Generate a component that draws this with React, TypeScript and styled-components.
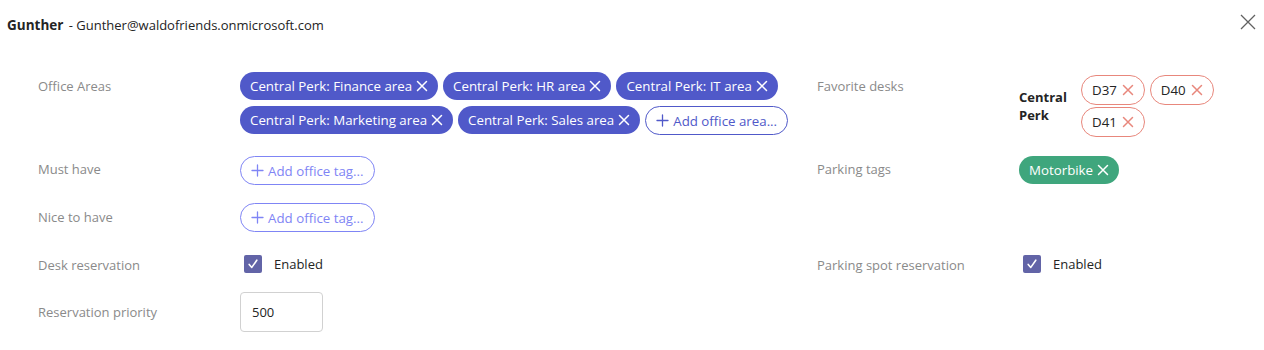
import React from 'react'
import styled, { createGlobalStyle } from 'styled-components'

const GlobalStyle = createGlobalStyle`
	html, body {
		margin: 0;
		padding: 0;
		background: #fff;
	}
	body {
		font-family: 'Open Sans', 'Liberation Sans', sans-serif;
		font-size: 13px;
		color: #242424;
	}
`

const Page = styled.div`
	width: 1264px;
	height: 350px;
	background: #fff;
`

const Header = styled.div`
	display: flex;
	justify-content: space-between;
	align-items: flex-start;
	height: 50px;
	padding: 15px 8px 0 7px;
	box-sizing: border-box;
`

const Title = styled.div`
	line-height: 20px;
	font-size: 13px;
	color: #242424;

	b {
		font-size: 13.5px;
		font-weight: 700;
		margin-right: 2px;
	}
`

const CloseButton = styled.button`
	border: none;
	background: none;
	padding: 0;
	margin-top: -1px;
	width: 16px;
	height: 16px;
	display: flex;
	cursor: pointer;
	color: #616161;
`

const Form = styled.div`
	display: grid;
	grid-template-columns: 202px 577px 202px 1fr;
	grid-template-rows: 67px 30px 30px 25px 40px;
	row-gap: 17px;
	padding: 22px 0 0 38px;
`

const Label = styled.div<{ $top: number }>`
	color: #8a8a8a;
	line-height: 20px;
	padding-top: ${(p) => p.$top}px;
`

const Chips = styled.div`
	display: flex;
	flex-wrap: wrap;
	gap: 6px 5px;
	align-content: flex-start;
`

const Chip = styled.span<{ $color: string }>`
	display: inline-flex;
	align-items: center;
	gap: 4px;
	height: 28px;
	padding: 0 10px;
	box-sizing: border-box;
	border-radius: 14px;
	background: ${(p) => p.$color};
	color: #fff;
	font-size: 13.3px;
	font-weight: 500;
	white-space: nowrap;
`

const AddChip = styled.span<{ $color: string }>`
	display: inline-flex;
	align-items: center;
	gap: 4px;
	height: 29px;
	padding: 0 10px;
	box-sizing: border-box;
	border-radius: 15px;
	border: 1px solid ${(p) => p.$color};
	color: ${(p) => p.$color};
	font-size: 13.3px;
	white-space: nowrap;
`

const DeskCell = styled.div`
	display: flex;
	align-items: center;
	padding-top: 3px;
	height: 62px;
`

const Building = styled.div`
	width: 50px;
	margin-right: 12px;
	font-weight: 700;
	line-height: 18px;
`

const DeskChips = styled.div`
	display: flex;
	flex-wrap: wrap;
	gap: 2px 5px;
	width: 140px;
`

const DeskChip = styled.span`
	display: inline-flex;
	align-items: center;
	gap: 5px;
	height: 30px;
	padding: 0 10px;
	box-sizing: border-box;
	border-radius: 15px;
	border: 1px solid #e8877c;
	color: #242424;
	font-size: 13.3px;
	white-space: nowrap;
`

const CheckRow = styled.label`
	display: flex;
	align-items: center;
	gap: 12px;
	padding: 5px 0 0 4px;
	height: 18px;
`

const Box = styled.span`
	width: 18px;
	height: 18px;
	border-radius: 2px;
	background: #6264a7;
	display: flex;
	align-items: center;
	justify-content: center;
`

const NumberInput = styled.input`
	width: 83px;
	height: 40px;
	box-sizing: border-box;
	border: 1px solid #d1d1d1;
	border-radius: 4px;
	padding: 0 11px;
	font: inherit;
	color: #242424;
	outline: none;
`

const Cross = ({ color, size = 12 }: { color: string; size?: number }) => (
	<svg width={size} height={size} viewBox='0 0 12 12' fill='none'>
		<path d='M1.5 1.5l9 9M10.5 1.5l-9 9' stroke={color} strokeWidth='1.5' strokeLinecap='round' />
	</svg>
)

const Plus = ({ color }: { color: string }) => (
	<svg width='13' height='13' viewBox='0 0 13 13' fill='none'>
		<path d='M6.5 1v11M1 6.5h11' stroke={color} strokeWidth='1.3' strokeLinecap='round' />
	</svg>
)

const Checkbox = ({ text }: { text: string }) => (
	<CheckRow>
		<Box>
			<svg width='12' height='12' viewBox='0 0 12 12' fill='none'>
				<path d='M2.2 6.4l2.6 3L9.8 2.2' stroke='#fff' strokeWidth='1.6' strokeLinecap='round' strokeLinejoin='round' />
			</svg>
		</Box>
		<span>{text}</span>
	</CheckRow>
)

const areas = ['Finance area', 'HR area', 'IT area', 'Marketing area', 'Sales area']
const desks = ['D37', 'D40', 'D41']

const BLUE = '#5059c9'
const LAVENDER = '#7f85f5'

const App = () => {
	return (
		<Page>
			<GlobalStyle />
			<Header>
				<Title>
					<b>Gunther</b> - Gunther@waldofriends.onmicrosoft.com
				</Title>
				<CloseButton aria-label='Close'>
					<svg width='16' height='16' viewBox='0 0 16 16' fill='none'>
						<path d='M1 1l14 14M15 1L1 15' stroke='currentColor' strokeWidth='1.3' />
					</svg>
				</CloseButton>
			</Header>
			<Form>
				<Label $top={4}>Office Areas</Label>
				<Chips>
					{areas.map((a) => (
						<Chip key={a} $color={BLUE}>
							Central Perk: {a}
							<Cross color='#fff' />
						</Chip>
					))}
					<AddChip $color={BLUE}>
						<Plus color={BLUE} />
						Add office area...
					</AddChip>
				</Chips>
				<Label $top={4}>Favorite desks</Label>
				<DeskCell>
					<Building>Central Perk</Building>
					<DeskChips>
						{desks.map((d) => (
							<DeskChip key={d}>
								{d}
								<Cross color='#e8877c' />
							</DeskChip>
						))}
					</DeskChips>
				</DeskCell>

				<Label $top={3}>Must have</Label>
				<Chips>
					<AddChip $color={LAVENDER}>
						<Plus color={LAVENDER} />
						Add office tag...
					</AddChip>
				</Chips>
				<Label $top={3}>Parking tags</Label>
				<Chips>
					<Chip $color='#3fa67d'>
						Motorbike
						<Cross color='#fff' />
					</Chip>
				</Chips>

				<Label $top={4}>Nice to have</Label>
				<Chips>
					<AddChip $color={LAVENDER}>
						<Plus color={LAVENDER} />
						Add office tag...
					</AddChip>
				</Chips>
				<div />
				<div />

				<Label $top={5}>Desk reservation</Label>
				<Checkbox text='Enabled' />
				<Label $top={5}>Parking spot reservation</Label>
				<Checkbox text='Enabled' />

				<Label $top={10}>Reservation priority</Label>
				<div>
					<NumberInput defaultValue='500' />
				</div>
			</Form>
		</Page>
	)
}

export default App
